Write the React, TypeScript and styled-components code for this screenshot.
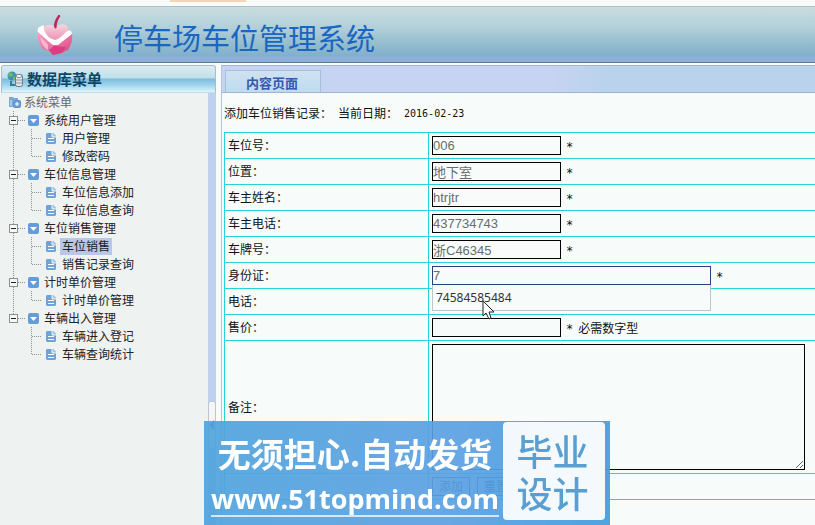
import React from "react";
import styled, { createGlobalStyle, css } from "styled-components";

const cjk = `"Liberation Sans", "Noto Sans CJK SC", sans-serif`;

const GlobalStyle = createGlobalStyle`
  * { box-sizing: border-box; }
  html { height: 100%; overflow: hidden; }
  body { margin: 0; height: 100%; background: #f7fcfa; color: #111; font: 12px/18px ${cjk}; }
  #root { height: 100%; }
`;

const Page = styled.div`
  height: 100%;
  display: flex;
  flex-direction: column;
  overflow: hidden;
`;

const TopStrip = styled.div`
  flex: none;
  height: 6px;
  padding-left: 170px;
`;

const StripTab = styled.div`
  width: 76px;
  height: 2px;
  background: #f3d5b5;
`;

const Header = styled.header`
  flex: none;
  display: flex;
  align-items: center;
  gap: 40px;
  height: 57px;
  padding-left: 36px;
  border-top: 1px solid #a9c3c4;
  border-bottom: 1px solid #56788c;
  background: linear-gradient(#c9dde0, #b2cfda 38%, #93bccd 68%, #82b0cb 88%, #8eafd9 92%, #8eafd9);
`;

const SiteTitle = styled.h1`
  margin: 0;
  padding-top: 4px;
  font: 400 29px/40px "Noto Sans CJK SC", sans-serif;
  color: #1a66c0;
`;

const Body = styled.div`
  flex: 1;
  display: flex;
  gap: 5px;
  min-height: 0;
  padding-top: 2px;
`;

const Sidebar = styled.aside`
  flex: none;
  display: flex;
  flex-direction: column;
  width: 216px;
`;

const MenuHeading = styled.h2`
  flex: none;
  display: flex;
  align-items: center;
  gap: 4px;
  height: 28px;
  margin: 0 0 0 1px;
  padding: 0 5px;
  border: 1px solid #a9bccb;
  border-bottom-color: #c3dce9;
  border-radius: 3px 3px 0 0;
  background: linear-gradient(#dcebf0, #bfe0ec 46%, #7dbce0 50%, #a3d6ee 75%, #dff4fa);
  font: 700 15px/20px "Noto Sans CJK SC", sans-serif;
  color: #0c4565;
`;

const SidebarBody = styled.div`
  flex: 1;
  display: flex;
  min-height: 0;
  background: #eef2f1;
`;

const TreeNav = styled.nav`
  flex: 1;
`;

const Splitter = styled.div`
  width: 8px;
  display: flex;
  flex-direction: column;
  justify-content: center;
  background: #bfd1ee;
  padding-top: 232px;
`;

const SplitHandle = styled.button`
  width: 8px;
  height: 48px;
  padding: 0;
  border: 1px solid #b9c6d6;
  border-radius: 2px;
  background: #f5f6f1;
  font-size: 0;
  display: flex;
  align-items: center;
`;

const TreeList = styled.ul`
  margin: 0;
  padding: 0;
  list-style: none;
`;

const TreeRow = styled.div<{ $depth: number }>`
  display: flex;
  align-items: center;
  height: 18px;
  padding-left: ${(p) => (p.$depth === 0 ? 8 : 4)}px;
`;

const RootLabel = styled.span`
  padding: 2px 0 0 3px;
  color: #666;
`;

const TreeToggle = styled.button`
  display: flex;
  align-items: center;
  padding: 0;
  border: 0;
  background: none;
  font: inherit;
  color: #222;
`;

const GroupLabel = styled.span`
  padding-top: 2px;
`;

const TreeLink = styled.a<{ $selected?: boolean }>`
  padding: 1px 2px 0;
  margin-left: -2px;
  line-height: 16px;
  text-decoration: none;
  color: #222;
  ${(p) => p.$selected && css`background: #b9c8e6;`}
`;

const Guide = styled.svg`
  flex: none;
  width: 18px;
  height: 18px;
  overflow: visible;
`;

const IconCell = styled.svg`
  flex: none;
  width: 22px;
  height: 18px;
`;

const Main = styled.main`
  flex: 1;
  min-width: 0;
  display: flex;
  flex-direction: column;
  border-left: 1px solid #b3c2df;
`;

const TabBar = styled.div`
  flex: none;
  display: flex;
  align-items: flex-end;
  height: 28px;
  padding-left: 3px;
  border-top: 1px solid #a3b4ce;
  border-bottom: 1px solid #9fb3cc;
  background: linear-gradient(90deg, #c7d3f2 0, #c7d3f2 55%, #b9d3ec 65%);
`;

const Tab = styled.button`
  width: 96px;
  height: 22px;
  padding: 2px 2px 0 0;
  border: 1px solid #a5bfd8;
  border-bottom: 0;
  background: linear-gradient(#cfe2f1, #bddcef);
  font: 700 13px/20px "Noto Sans CJK SC", sans-serif;
  color: #3557ae;
`;

const Content = styled.div`
  padding: 12px 0 0 2px;
`;

const Intro = styled.p`
  display: flex;
  gap: 6px;
  margin: 0 0 9px;
`;

const Mono = styled.span`
  font-family: "DejaVu Sans Mono", monospace;
  font-size: 10px;
`;

const Required = styled(Mono)`
  padding-top: 2px;
  font-size: 12px;
`;

const FormTable = styled.table`
  width: 100%;
  table-layout: fixed;
  border-collapse: collapse;
  border: 1px solid #27d3d3;
  border-right: 0;
`;

const LabelColumn = styled.col`
  width: 204px;
`;

const LabelCell = styled.th`
  height: 26px;
  padding: 1px 3px 0;
  border: 1px solid #27d3d3;
  font-weight: 400;
  text-align: left;
`;

const FieldCell = styled.td`
  padding: 3px;
  border: 1px solid #27d3d3;
  border-right: 0;
  line-height: 1;
`;

const FieldLine = styled.div`
  display: flex;
  align-items: center;
  gap: 5px;
  height: 19px;
`;

const Hint = styled.span`
  padding-top: 2px;
`;

const Combo = styled.div`
  position: relative;
`;

const TextField = styled.input<{ $wide?: boolean }>`
  display: block;
  width: ${(p) => (p.$wide ? 279 : 129)}px;
  height: 19px;
  padding: 0;
  border: 1px solid ${(p) => (p.$wide ? "#24427c" : "#000")};
  border-radius: 0;
  outline: 0;
  background: transparent;
  font: 13px/17px ${cjk};
  color: #6c6c6c;
  caret-color: #444;
`;

const Suggestions = styled.ul`
  position: absolute;
  z-index: 1;
  top: 19px;
  left: 0;
  width: 100%;
  height: 26px;
  margin: 0;
  padding: 4px 3px;
  border: 1px solid #bcc4cc;
  border-top: 0;
  background: #f7fcfa;
  list-style: none;
  font: 12px/17px "Noto Sans", sans-serif;
  color: #333;
`;

const Pointer = styled.svg`
  position: absolute;
  z-index: 2;
  top: 34px;
  left: 50px;
  width: 13px;
  height: 20px;
`;

const Notes = styled.textarea`
  display: block;
  width: 373px;
  height: 126px;
  border: 1px solid #000;
  border-radius: 0;
  background: transparent;
  font: 13px/17px ${cjk};
`;

const Actions = styled.div`
  display: flex;
  gap: 7px;
  height: 19px;
`;

const ActionButton = styled.button`
  width: 38px;
  height: 19px;
  padding: 0;
  border: 1px solid #333;
  background: #f0f4f4;
  font: 12px/16px ${cjk};
  color: #222;
`;

const Banner = styled.div`
  position: fixed;
  z-index: 3;
  left: 204px;
  bottom: 0;
  display: flex;
  justify-content: space-between;
  width: 406px;
  height: 104px;
  padding: 1px 5px 5px 8px;
  background: linear-gradient(100deg, rgba(79, 163, 220, 0.92), rgba(91, 160, 226, 0.92) 60%, rgba(70, 158, 223, 0.95));
  color: #fff;
`;

const BannerText = styled.div`
  display: flex;
  flex-direction: column;
  align-items: center;
  width: 286px;
`;

const Slogan = styled.strong`
  padding-top: 11px;
  font: 700 33px/40px "Noto Sans CJK SC", sans-serif;
  white-space: nowrap;
`;

const BannerLink = styled.a`
  margin-top: 10px;
  border-bottom: 2px solid #d5e8f8;
  font: 700 27px/32px "Open Sans", sans-serif;
  text-decoration: none;
  color: #fff;
`;

const BannerTile = styled.div`
  display: flex;
  flex-direction: column;
  align-items: center;
  justify-content: center;
  width: 102px;
  padding-right: 3px;
  border-radius: 4px;
  background: rgba(255, 255, 255, 0.93);
  font: 500 36px/42px "Noto Sans CJK SC", sans-serif;
  color: #5a9fd0;
`;

const dotted = { stroke: "#8d9090", strokeWidth: 1, strokeDasharray: "1 1" };

function AppleLogo() {
  return (
    <svg width="38" height="42" viewBox="0 0 38 42" aria-hidden="true">
      <defs>
        <linearGradient id="skin" x1="0" y1="0" x2="0" y2="1">
          <stop offset="0" stopColor="#f7d3df" />
          <stop offset="1" stopColor="#e888ad" />
        </linearGradient>
        <linearGradient id="cup" x1="0" y1="0" x2="1" y2="1">
          <stop offset="0" stopColor="#f6a3c3" />
          <stop offset="0.6" stopColor="#e86a9d" />
          <stop offset="1" stopColor="#dc3f82" />
        </linearGradient>
      </defs>
      <path d="M8 13c4-4 8-2 12 0 4-3 9-4 12 0 2 5-2 12-6 14l-8 2-8-6C7 20 6 16 8 13z" fill="url(#skin)" />
      <path d="M3 13l5-2c-1 5 2 10 6 13l5 2c4-1 7-4 10-7 2-2 4-3 6-2l1 3-13 12-5 1L2 19c-1-3 0-5 1-6z" fill="#fff" />
      <path d="M2 18l10 9 5 4h5l14-11c1 6-1 11-4 16l-7 3-8 2-4-4-6-2C3 29 1 24 2 18z" fill="url(#cup)" />
      <path d="M13 36l5-4 12 1-4 6-9 2z" fill="#dd3d82" />
      <path d="M4 23c3 2 6 5 8 8v5c-5-3-7-8-8-13z" fill="#f8b6ce" />
      <path d="M19 14c-1-4 0-8 4-13l1 1c-3 4-4 8-4 12z" fill="#bd2457" stroke="#bd2457" />
    </svg>
  );
}

function DatabaseIcon() {
  return (
    <svg width="16" height="16" viewBox="0 0 16 16" aria-hidden="true">
      <circle cx="5" cy="5" r="4.500" fill="#3b93b5" />
      <path d="M2 2c2-1 4 0 4 2L4 6 1 5zM6 6l3-1-1 4-2 0z" fill="#6eba68" />
      <path d="M4 10v4h5" fill="none" stroke="#397b91" strokeWidth="2" />
      <rect x="8.500" y="3.500" width="7" height="12" rx="2" fill="#dfe4e6" stroke="#6a7c85" />
      <ellipse cx="12" cy="5" rx="3" ry="1.500" fill="#fff" stroke="#7e8e96" />
      <path d="M9 9h6M9 12h6" stroke="#8d999f" />
    </svg>
  );
}

function FolderIcon() {
  return (
    <svg width="13" height="14" viewBox="0 0 13 14" aria-hidden="true">
      <path d="M1 2h4l1 1h4v3H5v6H1z" fill="#79a7da" />
      <path d="M3 5v6" stroke="#d7e6f6" />
      <rect x="5.500" y="5.500" width="7" height="7" rx="1" fill="#6a9ed8" stroke="#5a90cd" />
      <path d="M9 7v4M7 9h4" stroke="#fff" />
    </svg>
  );
}

function GroupGuide({ last }: { last: boolean }) {
  return (
    <Guide viewBox="0 0 18 18" aria-hidden="true">
      <path d={last ? "M9.500 0v5" : "M9.500 0v18"} {...dotted} />
      <path d="M14 9.500h8" {...dotted} />
      <rect x="5.500" y="5.500" width="8" height="8" fill="#f6f8f8" stroke="#8a8f8f" />
      <path d="M7 9.500h5" stroke="#222" />
    </Guide>
  );
}

function LineGuide({ visible }: { visible: boolean }) {
  return (
    <Guide viewBox="0 0 18 18" aria-hidden="true">
      {visible && <path d="M9.500 0v18" {...dotted} />}
    </Guide>
  );
}

function LeafGuide({ last }: { last: boolean }) {
  return (
    <Guide viewBox="0 0 18 18" aria-hidden="true">
      <path d={last ? "M9.500 0v9" : "M9.500 0v18"} {...dotted} />
      <path d="M10 9.500h10" {...dotted} />
    </Guide>
  );
}

function GroupIcon() {
  return (
    <IconCell viewBox="0 0 22 18" aria-hidden="true">
      <rect x="6" y="4" width="11" height="11" rx="2" fill="#649cd8" />
      <path d="M8 8h7l-3.500 4z" fill="#fff" />
    </IconCell>
  );
}

function PageIcon() {
  return (
    <IconCell viewBox="0 0 22 18" aria-hidden="true">
      <path d="M7 4h6l3 3v7l-1 1H7l-1-1V5z" fill="#6da2da" />
      <path d="M12 4v4h4" fill="#b9d4f0" stroke="#e8f1fa" />
      <path d="M8 9.500h6M8 12.500h6" stroke="#fff" />
    </IconCell>
  );
}

const groups = [
  { title: "系统用户管理", items: ["用户管理", "修改密码"] },
  { title: "车位信息管理", items: ["车位信息添加", "车位信息查询"] },
  { title: "车位销售管理", items: ["车位销售", "销售记录查询"] },
  { title: "计时单价管理", items: ["计时单价管理"] },
  { title: "车辆出入管理", items: ["车辆进入登记", "车辆查询统计"] },
];

const fields = [
  { id: "space", label: "车位号", value: "006" },
  { id: "place", label: "位置", value: "地下室" },
  { id: "owner", label: "车主姓名", value: "htrjtr" },
  { id: "ownerPhone", label: "车主电话", value: "437734743" },
  { id: "plate", label: "车牌号", value: "浙C46345" },
];

function FieldRow({ id, label, children }: { id: string; label: string; children?: React.ReactNode }) {
  return (
    <tr>
      <LabelCell scope="row">
        <label htmlFor={id}>{label}：</label>
      </LabelCell>
      <FieldCell>{children}</FieldCell>
    </tr>
  );
}

function MenuTree() {
  return (
    <TreeNav aria-label="系统菜单">
      <TreeRow $depth={0}>
        <FolderIcon />
        <RootLabel>系统菜单</RootLabel>
      </TreeRow>
      <TreeList>
        {groups.map((group, g) => {
          const lastGroup = g === groups.length - 1;
          return (
            <li key={group.title}>
              <TreeRow $depth={1}>
                <TreeToggle type="button" aria-expanded="true">
                  <GroupGuide last={lastGroup} />
                  <GroupIcon />
                  <GroupLabel>{group.title}</GroupLabel>
                </TreeToggle>
              </TreeRow>
              <TreeList>
                {group.items.map((item, i) => (
                  <li key={item}>
                    <TreeRow $depth={2}>
                      <LineGuide visible={!lastGroup} />
                      <LeafGuide last={i === group.items.length - 1} />
                      <PageIcon />
                      <TreeLink href="#" $selected={item === "车位销售"}>
                        {item}
                      </TreeLink>
                    </TreeRow>
                  </li>
                ))}
              </TreeList>
            </li>
          );
        })}
      </TreeList>
    </TreeNav>
  );
}

export default function App() {
  return (
    <Page>
      <GlobalStyle />
      <TopStrip>
        <StripTab />
      </TopStrip>
      <Header>
        <AppleLogo />
        <SiteTitle>停车场车位管理系统</SiteTitle>
      </Header>
      <Body>
        <Sidebar>
          <MenuHeading>
            <DatabaseIcon />
            数据库菜单
          </MenuHeading>
          <SidebarBody>
            <MenuTree />
            <Splitter>
              <SplitHandle type="button" aria-label="收起菜单">
                <svg width="6" height="10" viewBox="0 0 6 10" aria-hidden="true">
                  <path d="M5 0v10L0 5z" fill="#3b7fc4" />
                </svg>
              </SplitHandle>
            </Splitter>
          </SidebarBody>
        </Sidebar>
        <Main>
          <TabBar>
            <Tab type="button">内容页面</Tab>
          </TabBar>
          <Content>
            <Intro>
              <span>添加车位销售记录：</span>
              <span>当前日期：</span>
              <Mono>2016-02-23</Mono>
            </Intro>
            <form>
              <FormTable>
                <colgroup>
                  <LabelColumn />
                  <col />
                </colgroup>
                <tbody>
                  {fields.map((f) => (
                    <FieldRow key={f.id} id={f.id} label={f.label}>
                      <FieldLine>
                        <TextField id={f.id} defaultValue={f.value} />
                        <Required>*</Required>
                      </FieldLine>
                    </FieldRow>
                  ))}
                  <FieldRow id="idCard" label="身份证">
                    <FieldLine>
                      <Combo>
                        <TextField id="idCard" $wide defaultValue="7" autoFocus autoComplete="off" />
                        <Suggestions>
                          <li>74584585484</li>
                        </Suggestions>
                        <Pointer viewBox="0 0 13 20" aria-hidden="true">
                          <path d="M1 1v15l3-3 3 6 2-1-2-6h5z" fill="#fff" stroke="#222" />
                        </Pointer>
                      </Combo>
                      <Required>*</Required>
                    </FieldLine>
                  </FieldRow>
                  <FieldRow id="phone" label="电话">
                    <FieldLine>
                      <TextField id="phone" />
                    </FieldLine>
                  </FieldRow>
                  <FieldRow id="price" label="售价">
                    <FieldLine>
                      <TextField id="price" />
                      <Required>*</Required>
                      <Hint>必需数字型</Hint>
                    </FieldLine>
                  </FieldRow>
                  <FieldRow id="notes" label="备注">
                    <Notes id="notes" />
                  </FieldRow>
                  <tr>
                    <LabelCell as="td" />
                    <FieldCell>
                      <Actions>
                        <ActionButton type="submit">添加</ActionButton>
                        <ActionButton type="reset">重置</ActionButton>
                      </Actions>
                    </FieldCell>
                  </tr>
                </tbody>
              </FormTable>
            </form>
          </Content>
        </Main>
      </Body>
      <Banner>
        <BannerText>
          <Slogan>无须担心.自动发货</Slogan>
          <BannerLink href="#">www.51topmind.com</BannerLink>
        </BannerText>
        <BannerTile>
          <span>毕业</span>
          <span>设计</span>
        </BannerTile>
      </Banner>
    </Page>
  );
}
